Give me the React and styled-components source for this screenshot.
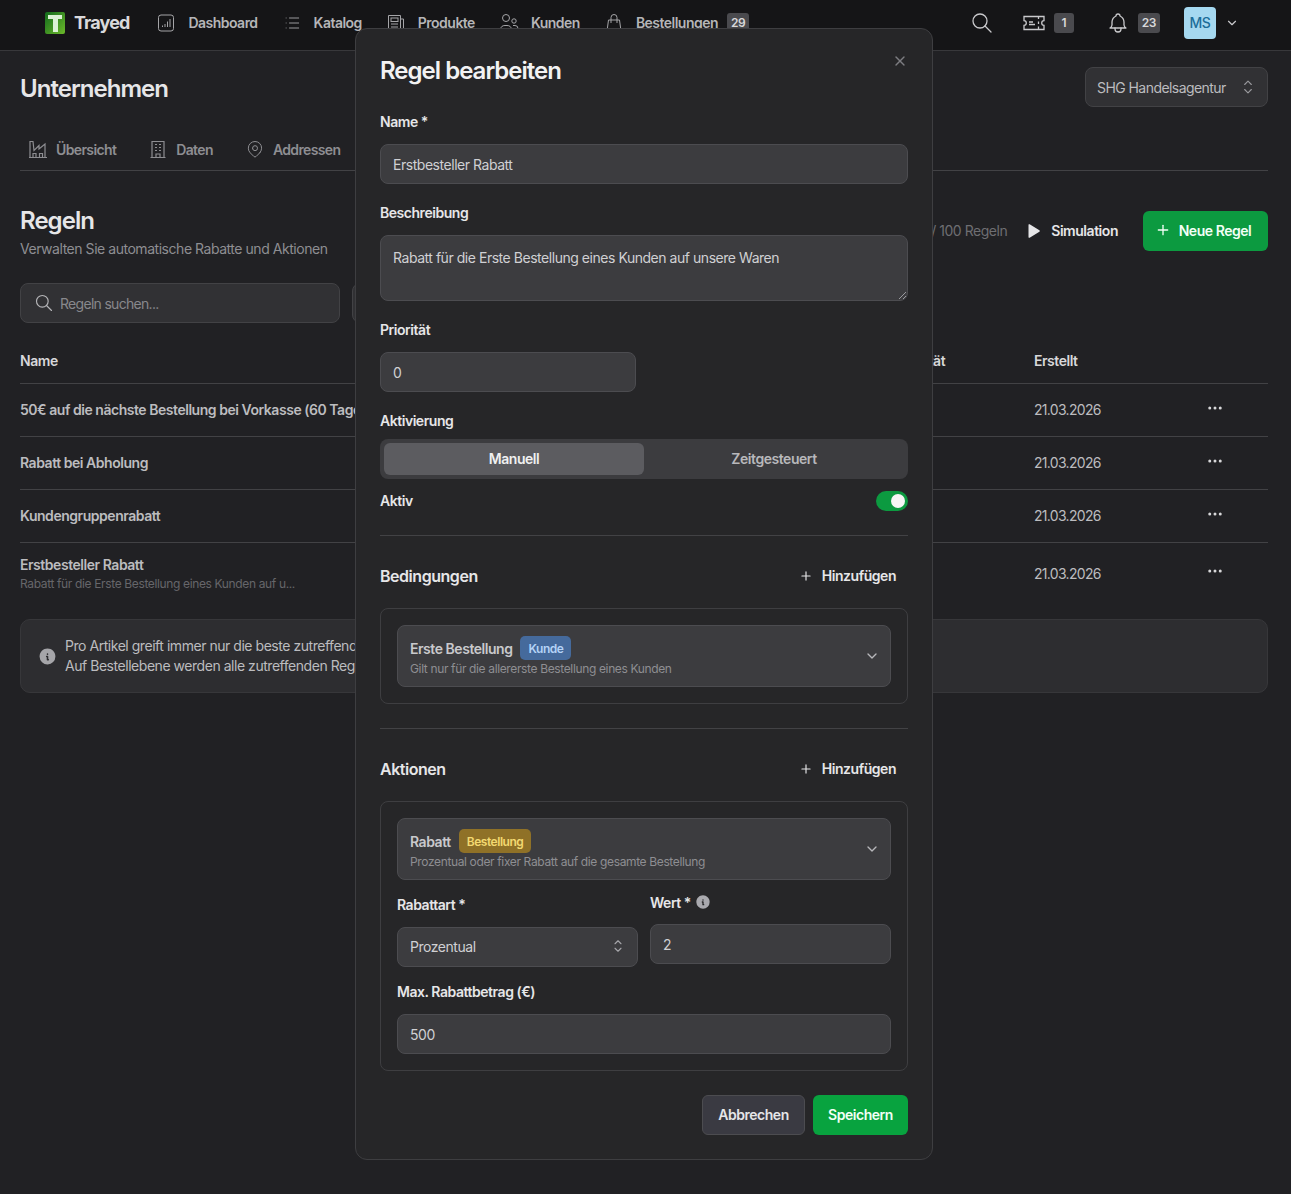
import React from "react";
import styled, { createGlobalStyle } from "styled-components";
import {
  TbList,
  TbSearch,
  TbBell,
  TbChevronDown,
  TbSelector,
  TbMapPin,
  TbPlayerPlayFilled,
  TbPlus,
  TbDots,
  TbX,
  TbInfoCircleFilled,
} from "react-icons/tb";

const GlobalStyle = createGlobalStyle`
  * { box-sizing: border-box; }
  html, body { margin: 0; padding: 0; background: #212124; }
  body {
    font-family: Inter, "Liberation Sans", sans-serif;
    font-size: 14px;
    letter-spacing: -0.033em;
    color: #d8d8da;
    overflow: hidden;
  }
  #root { height: 1194px; }
`;

const Logo = () => (
  <svg width="20" height="22" viewBox="0 0 20 22">
    <defs>
      <linearGradient id="logoGreen" x1="0" y1="0" x2="1" y2="1">
        <stop offset="0" stopColor="#116a1c" />
        <stop offset="1" stopColor="#6cb92b" />
      </linearGradient>
    </defs>
    <rect width="20" height="22" rx="2" fill="url(#logoGreen)" />
    <path d="M3 3h14v4h-4v13H8V7H3z" fill="#dcf2d6" />
  </svg>
);

const Line = ({ size = 20, children, width = 1 }) => (
  <svg width={size} height={size} viewBox="0 0 20 20" fill="none" stroke="currentColor" strokeWidth={width}>
    {children}
  </svg>
);

const DashIcon = () => (
  <Line>
    <rect x="2.5" y="2" width="15" height="16" rx="2.5" />
    <path d="M6.5 14v-1.5M9 14v-3M11.500 14V8.500M14 14V6" />
  </Line>
);

const NewsIcon = () => (
  <Line>
    <path d="M14.500 17.500h-12v-15h12zM14.500 6h3v11.500h-3" />
    <rect x="5" y="5" width="7" height="3.500" />
    <path d="M5 11h7M5 14h7" />
  </Line>
);

const UsersIcon = () => (
  <Line>
    <circle cx="7" cy="5" r="3.500" />
    <circle cx="15" cy="8" r="2.200" />
    <path d="M1.500 18v-1.500a4.500 4.500 0 0 1 4.500-4h2a4.500 4.500 0 0 1 4.500 4V18M14 12.500h2a3 3 0 0 1 3 3V18" />
  </Line>
);

const BagIcon = () => (
  <Line>
    <path d="M4.500 7h11l1.500 11H3z" />
    <path d="M7 10V4.500a3 3 0 0 1 6 0V10" />
  </Line>
);

const TicketIcon = () => (
  <svg width="24" height="24" viewBox="0 0 24 24" fill="none" stroke="currentColor" strokeWidth="1.300">
    <path d="M2 5.500h20v4.200a2.300 2.300 0 0 0 0 4.600v4.200H2v-4.200a2.300 2.300 0 0 0 0-4.600z" />
    <path d="M16.500 6v2M16.500 10.500v2.500M16.500 15.500V18M7 13.500h6M7 11h4" />
  </svg>
);

const FactoryIcon = () => (
  <Line width={1.2}>
    <path d="M2 18.500V2.500h3l1 9 5-5v3.500l6-5v13.500z" />
    <path d="M1 18.500h18M5 18.500v-4h3v4M11.500 18.500v-4h3v4" />
  </Line>
);

const BuildingIcon = () => (
  <Line width={1.2}>
    <path d="M4 18.500v-16h12v16M2.500 18.500h15" />
    <path d="M7 5.500h2M11 5.500h2M7 8.500h2M11 8.500h2M7 11.500h2M11 11.500h2M8 18.500v-3.500h4v3.500" />
  </Line>
);

const navItems = [
  { label: "Dashboard", icon: <DashIcon /> },
  { label: "Katalog", icon: <TbList size={20} strokeWidth={1.1} /> },
  { label: "Produkte", icon: <NewsIcon /> },
  { label: "Kunden", icon: <UsersIcon /> },
  { label: "Bestellungen", icon: <BagIcon />, count: 29 },
];

const rules = [
  { name: "50€ auf die nächste Bestellung bei Vorkasse (60 Tage)", date: "21.03.2026" },
  { name: "Rabatt bei Abholung", date: "21.03.2026" },
  { name: "Kundengruppenrabatt", date: "21.03.2026" },
  {
    name: "Erstbesteller Rabatt",
    note: "Rabatt für die Erste Bestellung eines Kunden auf u...",
    date: "21.03.2026",
  },
];

export default function App() {
  return (
    <Page>
      <GlobalStyle />
      <TopBar>
        <Brand>
          <Logo />
          <BrandName>Trayed</BrandName>
        </Brand>
        <Nav>
          {navItems.map((item) => (
            <NavItem key={item.label}>
              <NavIcon>{item.icon}</NavIcon>
              {item.label}
              {item.count && <Count>{item.count}</Count>}
            </NavItem>
          ))}
        </Nav>
        <TopActions>
          <TbSearch size={24} strokeWidth={1.300} />
          <ActionGroup $left={28}>
            <TicketIcon />
            <Count>1</Count>
          </ActionGroup>
          <ActionGroup $left={32}>
            <TbBell size={24} strokeWidth={1.300} />
            <Count>23</Count>
          </ActionGroup>
          <Avatar>MS</Avatar>
          <TbChevronDown size={14} />
        </TopActions>
      </TopBar>

      <Content>
        <CompanyRow>
          <PageTitle>Unternehmen</PageTitle>
          <CompanySelect>
            SHG Handelsagentur
            <TbSelector size={20} strokeWidth={1.300} />
          </CompanySelect>
        </CompanyRow>

        <Tabs>
          <Tab>
            <FactoryIcon />
            Übersicht
          </Tab>
          <Tab>
            <BuildingIcon />
            Daten
          </Tab>
          <Tab>
            <TbMapPin size={20} strokeWidth={1.200} />
            Addressen
          </Tab>
        </Tabs>

        <RulesHead>
          <div>
            <SectionTitle>Regeln</SectionTitle>
            <SectionNote>Verwalten Sie automatische Rabatte und Aktionen</SectionNote>
          </div>
          <RulesActions>
            <Quota>4 / 100 Regeln</Quota>
            <Simulation>
              <TbPlayerPlayFilled size={18} />
              Simulation
            </Simulation>
            <NewRule>
              <TbPlus size={16} />
              Neue Regel
            </NewRule>
          </RulesActions>
        </RulesHead>

        <Filters>
          <SearchBox>
            <TbSearch size={20} strokeWidth={1.400} />
            Regeln suchen...
          </SearchBox>
          <FilterBox />
        </Filters>

        <TableHead>
          <span>Name</span>
          <span>Priorität</span>
          <span>Erstellt</span>
          <span />
        </TableHead>
        {rules.map((rule) => (
          <Row key={rule.name} $tall={!!rule.note}>
            <NameCell>
              <RuleName>{rule.name}</RuleName>
              {rule.note && <RuleNote>{rule.note}</RuleNote>}
            </NameCell>
            <span />
            <DateCell>{rule.date}</DateCell>
            <DotsCell $tall={!!rule.note}>
              <TbDots size={18} />
            </DotsCell>
          </Row>
        ))}

        <InfoBox>
          <InfoIcon>
            <TbInfoCircleFilled size={19} />
          </InfoIcon>
          <div>
            Pro Artikel greift immer nur die beste zutreffende Regel.
            <br />
            Auf Bestellebene werden alle zutreffenden Regeln angewendet.
          </div>
        </InfoBox>
      </Content>

      <Modal>
        <ModalHead>
          <ModalTitle>Regel bearbeiten</ModalTitle>
          <CloseButton>
            <TbX size={16} />
          </CloseButton>
        </ModalHead>

        <Label>Name *</Label>
        <Input>Erstbesteller Rabatt</Input>

        <Label $top={20}>Beschreibung</Label>
        <TextArea>
          Rabatt für die Erste Bestellung eines Kunden auf unsere Waren
          <Grip viewBox="0 0 8 8" width="8" height="8">
            <path d="M1 8L8 1M5 8l3-3" stroke="#9a9a9e" strokeWidth="1" />
          </Grip>
        </TextArea>

        <Label $top={20}>Priorität</Label>
        <Input $width={256}>0</Input>

        <Label $top={20}>Aktivierung</Label>
        <Segmented>
          <Segment $active>Manuell</Segment>
          <Segment>Zeitgesteuert</Segment>
        </Segmented>

        <SwitchRow>
          <SwitchLabel>Aktiv</SwitchLabel>
          <Switch />
        </SwitchRow>

        <Divider />

        <BlockHead>
          <BlockTitle>Bedingungen</BlockTitle>
          <AddButton>
            <TbPlus size={14} />
            Hinzufügen
          </AddButton>
        </BlockHead>
        <Block>
          <RuleCard>
            <div>
              <CardTitle>
                Erste Bestellung
                <Badge $bg="#456a9c" $color="#b4d3f7">Kunde</Badge>
              </CardTitle>
              <CardNote>Gilt nur für die allererste Bestellung eines Kunden</CardNote>
            </div>
            <TbChevronDown size={16} />
          </RuleCard>
        </Block>

        <Divider $top={24} />

        <BlockHead>
          <BlockTitle>Aktionen</BlockTitle>
          <AddButton>
            <TbPlus size={14} />
            Hinzufügen
          </AddButton>
        </BlockHead>
        <Block>
          <RuleCard>
            <div>
              <CardTitle>
                Rabatt
                <Badge $bg="#8f7127" $color="#f3d971">Bestellung</Badge>
              </CardTitle>
              <CardNote>Prozentual oder fixer Rabatt auf die gesamte Bestellung</CardNote>
            </div>
            <TbChevronDown size={16} />
          </RuleCard>
          <FieldGrid>
            <div>
              <Label $top={16}>Rabattart *</Label>
              <SelectInput>
                Prozentual
                <TbSelector size={18} strokeWidth={1.500} />
              </SelectInput>
            </div>
            <div>
              <WertLabel>
                Wert *
                <TbInfoCircleFilled size={16} color="#a9a9ae" />
              </WertLabel>
              <Input>2</Input>
            </div>
          </FieldGrid>
          <Label $top={16}>Max. Rabattbetrag (€)</Label>
          <Input>500</Input>
        </Block>

        <ModalFooter>
          <GhostButton>Abbrechen</GhostButton>
          <SaveButton>Speichern</SaveButton>
        </ModalFooter>
      </Modal>
    </Page>
  );
}

const Page = styled.div`
  position: relative;
  height: 1194px;
  overflow: hidden;
  background: #212124;
`;

const TopBar = styled.header`
  display: flex;
  align-items: center;
  height: 51px;
  padding: 0 52px 5px 45px;
  background: #151517;
  border-bottom: 1px solid #38383b;
`;

const Brand = styled.div`
  display: flex;
  align-items: center;
  gap: 9px;
  margin-right: 27px;
`;

const BrandName = styled.span`
  font-size: 18px;
  font-weight: 700;
  letter-spacing: -0.05em;
  color: #d9d9db;
`;

const Nav = styled.nav`
  display: flex;
  align-items: center;
  gap: 24px;
`;

const NavItem = styled.div`
  display: flex;
  align-items: center;
  gap: 12px;
  font-weight: 600;
  letter-spacing: -0.037em;
  color: #b5b5b8;
`;

const NavIcon = styled.span`
  display: flex;
  color: #a5a5a8;
`;

const Count = styled.span`
  display: inline-flex;
  align-items: center;
  justify-content: center;
  min-width: 20px;
  height: 20px;
  padding: 0 4px;
  margin-left: -3px;
  border-radius: 3px;
  background: #4a4a4e;
  color: #d8d8da;
  font-size: 12px;
  font-weight: 600;
`;

const TopActions = styled.div`
  display: flex;
  align-items: center;
  margin-left: auto;
  color: #c9c9cc;
`;

const ActionGroup = styled.div`
  display: flex;
  align-items: center;
  gap: 11px;
  margin-left: ${(p) => p.$left}px;
`;

const Avatar = styled.div`
  display: flex;
  align-items: center;
  justify-content: center;
  width: 32px;
  height: 32px;
  margin: 0 9px 0 24px;
  border-radius: 4px;
  background: #a5d8f0;
  color: #1c6d99;
  font-size: 14px;
  font-weight: 500;
`;

const Content = styled.main`
  padding: 0 23px 0 20px;
`;

const CompanyRow = styled.div`
  display: flex;
  align-items: center;
  justify-content: space-between;
  height: 72px;
`;

const PageTitle = styled.h1`
  margin: 2px 0 0;
  font-size: 24px;
  font-weight: 600;
  letter-spacing: -0.04em;
  color: #e6e6e8;
`;

const CompanySelect = styled.div`
  display: flex;
  align-items: center;
  justify-content: space-between;
  width: 183px;
  height: 40px;
  padding: 0 9px 0 11px;
  background: #313134;
  border: 1px solid #424245;
  border-radius: 8px;
  letter-spacing: -0.04em;
  color: #bcbcbf;
  svg {
    color: #9a9a9e;
  }
`;

const Tabs = styled.div`
  display: flex;
  gap: 32px;
  height: 48px;
  padding: 6px 8px 0;
  border-bottom: 1px solid #424245;
`;

const Tab = styled.div`
  display: flex;
  align-items: center;
  gap: 8px;
  height: 40px;
  font-weight: 600;
  letter-spacing: -0.045em;
  color: #8e8e92;
`;

const RulesHead = styled.div`
  display: flex;
  justify-content: space-between;
  align-items: center;
  height: 100px;
  padding-top: 20px;
`;

const SectionTitle = styled.h2`
  margin: 0;
  font-size: 24px;
  font-weight: 600;
  letter-spacing: -0.04em;
  color: #e6e6e8;
`;

const SectionNote = styled.p`
  margin: 5px 0 0;
  color: #8e8e92;
`;

const RulesActions = styled.div`
  display: flex;
  align-items: center;
`;

const Quota = styled.span`
  padding-bottom: 1px;
  color: #6e6e72;
`;

const Simulation = styled.div`
  display: flex;
  align-items: center;
  gap: 9px;
  margin: 0 25px 0 17px;
  padding-bottom: 1px;
  font-weight: 600;
  color: #e6e6e8;
`;

const NewRule = styled.div`
  display: flex;
  align-items: center;
  justify-content: center;
  gap: 8px;
  width: 125px;
  height: 40px;
  padding: 0 5px 2px 0;
  background: #0c9a40;
  border-radius: 6px;
  font-weight: 600;
  color: #f2fff6;
`;

const Filters = styled.div`
  display: flex;
  gap: 12px;
  margin-top: 12px;
`;

const SearchBox = styled.div`
  display: flex;
  align-items: center;
  gap: 6px;
  width: 320px;
  height: 40px;
  padding: 0 13px;
  background: #313134;
  border: 1px solid #424245;
  border-radius: 8px;
  letter-spacing: -0.05em;
  color: #88888c;
  svg {
    color: #b5b5b8;
  }
`;

const FilterBox = styled(SearchBox)`
  width: 200px;
`;

const columns = `
  display: grid;
  grid-template-columns: 1fr 139px 180px 54px;
  align-items: center;
`;

const TableHead = styled.div`
  ${columns}
  height: 61px;
  padding-top: 15px;
  border-bottom: 1px solid #424245;
  font-weight: 600;
  color: #d8d8da;
`;

const Row = styled.div`
  ${columns}
  height: ${(p) => (p.$tall ? 60 : 53)}px;
  padding-bottom: ${(p) => (p.$tall ? 0 : 2)}px;
  border-bottom: ${(p) => (p.$tall ? "none" : "1px solid #424245")};
`;

const NameCell = styled.div`
  min-width: 0;
  white-space: nowrap;
`;

const RuleName = styled.div`
  font-weight: 600;
  color: #bcbcbf;
`;

const RuleNote = styled.div`
  margin-top: 3px;
  font-size: 12px;
  letter-spacing: -0.03em;
  color: #66666a;
`;

const DateCell = styled.span`
  letter-spacing: -0.05em;
  color: #bcbcbf;
`;

const DotsCell = styled.span`
  display: flex;
  margin: 0 0 ${(p) => (p.$tall ? 4 : 2)}px -8px;
  color: #d8d8da;
`;

const InfoBox = styled.div`
  display: flex;
  align-items: center;
  gap: 8px;
  height: 74px;
  margin-top: 16px;
  padding: 0 17px;
  background: #2d2d30;
  border: 1px solid #37373a;
  border-radius: 10px;
  line-height: 20px;
  color: #bcbcbf;
`;

const InfoIcon = styled.span`
  display: flex;
  color: #a5a5a9;
`;

const Modal = styled.section`
  position: absolute;
  top: 28px;
  left: 355px;
  width: 578px;
  height: 1132px;
  padding: 0 24px;
  background: #262628;
  border: 1px solid #3e3e41;
  border-radius: 12px;
`;

const ModalHead = styled.div`
  display: flex;
  align-items: flex-start;
  justify-content: space-between;
  height: 84px;
  padding-top: 26px;
`;

const ModalTitle = styled.h2`
  margin: 0;
  font-size: 24px;
  line-height: 32px;
  font-weight: 600;
  letter-spacing: -0.041em;
  color: #f2f2f3;
`;

const CloseButton = styled.span`
  display: flex;
  margin-top: -2px;
  color: #7d7d81;
`;

const Label = styled.div`
  height: 20px;
  margin: ${(p) => p.$top || 0}px 0 11px;
  line-height: 18px;
  font-weight: 600;
  color: #e6e6e8;
`;

const Input = styled.div`
  display: flex;
  align-items: center;
  width: ${(p) => (p.$width ? `${p.$width}px` : "100%")};
  height: 40px;
  padding: 0 12px;
  background: #3c3c3f;
  border: 1px solid #4c4c50;
  border-radius: 8px;
  color: #d0d0d3;
`;

const SelectInput = styled(Input)`
  justify-content: space-between;
  padding: 0 10px 2px 12px;
  svg {
    color: #a5a5a9;
  }
`;

const TextArea = styled.div`
  position: relative;
  height: 66px;
  padding: 13px 12px;
  background: #3c3c3f;
  border: 1px solid #4c4c50;
  border-radius: 8px;
  line-height: 18px;
  color: #d0d0d3;
`;

const Grip = styled.svg`
  position: absolute;
  right: 1px;
  bottom: 1px;
`;

const Segmented = styled.div`
  display: grid;
  grid-template-columns: 1fr 1fr;
  height: 40px;
  margin-top: -4px;
  padding: 4px;
  background: #3c3c3f;
  border-radius: 8px;
`;

const Segment = styled.div`
  display: flex;
  align-items: center;
  justify-content: center;
  padding-bottom: 2px;
  border-radius: 6px;
  font-weight: 600;
  background: ${(p) => (p.$active ? "#5c5c60" : "transparent")};
  color: ${(p) => (p.$active ? "#f0f0f1" : "#b8b8bb")};
`;

const SwitchRow = styled.div`
  display: flex;
  align-items: center;
  justify-content: space-between;
  height: 20px;
  margin-top: 12px;
`;

const SwitchLabel = styled.span`
  margin-bottom: 2px;
  font-weight: 600;
  color: #e6e6e8;
`;

const Switch = styled.span`
  position: relative;
  display: block;
  width: 32px;
  height: 20px;
  background: #0c9a40;
  border-radius: 10px;
  &::after {
    content: "";
    position: absolute;
    top: 3px;
    right: 3px;
    width: 14px;
    height: 14px;
    border-radius: 50%;
    background: #f6f6f6;
  }
`;

const Divider = styled.div`
  height: 1px;
  margin-top: ${(p) => p.$top || 24}px;
  background: #424245;
`;

const BlockHead = styled.div`
  display: flex;
  align-items: center;
  justify-content: space-between;
  height: 40px;
  margin: 20px 0 12px;
`;

const BlockTitle = styled.h3`
  margin: 0;
  font-size: 16px;
  font-weight: 600;
  color: #e6e6e8;
`;

const AddButton = styled.div`
  display: flex;
  align-items: center;
  gap: 9px;
  padding: 0 12px 1px 0;
  font-weight: 600;
  color: #e6e6e8;
`;

const Block = styled.div`
  padding: 16px;
  border: 1px solid #3e3e41;
  border-radius: 8px;
`;

const RuleCard = styled.div`
  display: flex;
  align-items: center;
  justify-content: space-between;
  height: 62px;
  padding: 0 10px 0 12px;
  background: #3c3c3f;
  border: 1px solid #4c4c50;
  border-radius: 8px;
  svg {
    color: #b8b8bb;
  }
`;

const CardTitle = styled.div`
  display: flex;
  align-items: center;
  gap: 8px;
  font-weight: 600;
  color: #c9c9cc;
`;

const Badge = styled.span`
  display: inline-flex;
  align-items: center;
  height: 24px;
  padding: 0 8px;
  border-radius: 5px;
  background: ${(p) => p.$bg};
  color: ${(p) => p.$color};
  font-size: 12px;
  font-weight: 600;
`;

const CardNote = styled.div`
  margin-top: 1px;
  font-size: 12px;
  letter-spacing: -0.03em;
  color: #8e8e92;
`;

const FieldGrid = styled.div`
  display: grid;
  grid-template-columns: 241px 241px;
  gap: 12px;
`;

const WertLabel = styled.div`
  display: flex;
  align-items: center;
  gap: 4px;
  height: 20px;
  margin: 12px 0;
  font-weight: 600;
  color: #e6e6e8;
`;

const ModalFooter = styled.div`
  display: flex;
  justify-content: flex-end;
  gap: 8px;
  margin-top: 24px;
`;

const GhostButton = styled.div`
  display: flex;
  align-items: center;
  justify-content: center;
  width: 103px;
  height: 40px;
  padding-bottom: 2px;
  background: #3a3a42;
  border: 1px solid #4c4c50;
  border-radius: 6px;
  font-weight: 600;
  color: #e6e6e8;
`;

const SaveButton = styled(GhostButton)`
  width: 95px;
  background: #08a33f;
  border: none;
  color: #f2fff6;
`;
